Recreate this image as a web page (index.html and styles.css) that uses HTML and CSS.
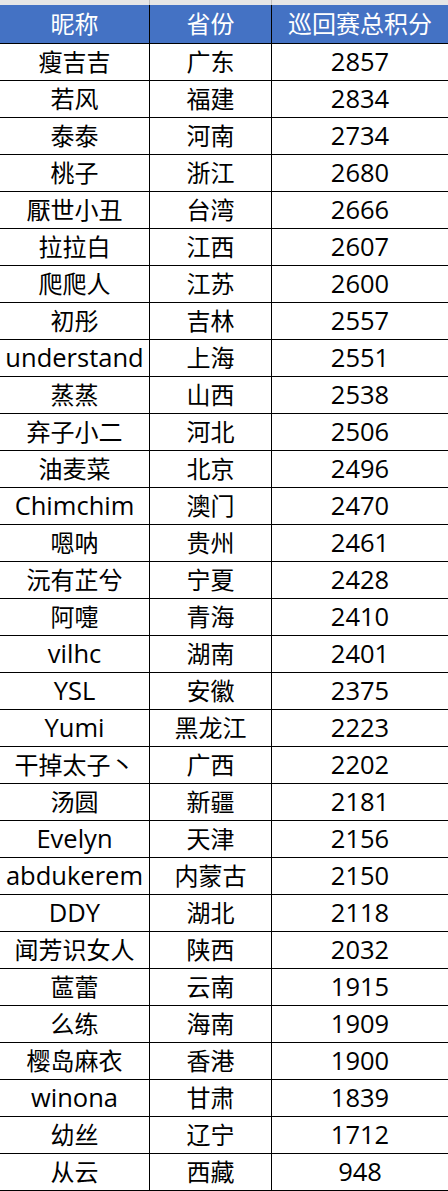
FILE: index.html
```html
<!DOCTYPE html>
<html lang="zh">
<head>
<meta charset="utf-8">
<link rel="stylesheet" href="styles.css">
</head>
<body>
<div class="sheet">
  <div class="strip"><span></span><span></span></div>
  <div class="row head"><div>昵称</div><div>省份</div><div>巡回赛总积分</div></div>
  <div class="row"><div>瘦吉吉</div><div>广东</div><div class="en">2857</div></div>
  <div class="row"><div>若风</div><div>福建</div><div class="en">2834</div></div>
  <div class="row"><div>泰泰</div><div>河南</div><div class="en">2734</div></div>
  <div class="row"><div>桃子</div><div>浙江</div><div class="en">2680</div></div>
  <div class="row"><div>厭世小丑</div><div>台湾</div><div class="en">2666</div></div>
  <div class="row"><div>拉拉白</div><div>江西</div><div class="en">2607</div></div>
  <div class="row"><div>爬爬人</div><div>江苏</div><div class="en">2600</div></div>
  <div class="row"><div>初彤</div><div>吉林</div><div class="en">2557</div></div>
  <div class="row"><div class="en">understand</div><div>上海</div><div class="en">2551</div></div>
  <div class="row"><div>蒸蒸</div><div>山西</div><div class="en">2538</div></div>
  <div class="row"><div>弃子小二</div><div>河北</div><div class="en">2506</div></div>
  <div class="row"><div>油麦菜</div><div>北京</div><div class="en">2496</div></div>
  <div class="row"><div class="en">Chimchim</div><div>澳门</div><div class="en">2470</div></div>
  <div class="row"><div>嗯呐</div><div>贵州</div><div class="en">2461</div></div>
  <div class="row"><div>沅有芷兮</div><div>宁夏</div><div class="en">2428</div></div>
  <div class="row"><div>阿嚏</div><div>青海</div><div class="en">2410</div></div>
  <div class="row"><div class="en">vilhc</div><div>湖南</div><div class="en">2401</div></div>
  <div class="row"><div class="en">YSL</div><div>安徽</div><div class="en">2375</div></div>
  <div class="row"><div class="en">Yumi</div><div>黑龙江</div><div class="en">2223</div></div>
  <div class="row"><div>干掉太子丶</div><div>广西</div><div class="en">2202</div></div>
  <div class="row"><div>汤圆</div><div>新疆</div><div class="en">2181</div></div>
  <div class="row"><div class="en">Evelyn</div><div>天津</div><div class="en">2156</div></div>
  <div class="row"><div class="en">abdukerem</div><div>内蒙古</div><div class="en">2150</div></div>
  <div class="row"><div class="en">DDY</div><div>湖北</div><div class="en">2118</div></div>
  <div class="row"><div>闻芳识女人</div><div>陕西</div><div class="en">2032</div></div>
  <div class="row"><div>蓲蕾</div><div>云南</div><div class="en">1915</div></div>
  <div class="row"><div>么练</div><div>海南</div><div class="en">1909</div></div>
  <div class="row"><div>樱岛麻衣</div><div>香港</div><div class="en">1900</div></div>
  <div class="row"><div class="en">winona</div><div>甘肃</div><div class="en">1839</div></div>
  <div class="row"><div>幼丝</div><div>辽宁</div><div class="en">1712</div></div>
  <div class="row"><div>从云</div><div>西藏</div><div class="en">948</div></div>
</div>
</body>
</html>
```
FILE: styles.css
```css
html, body {
  margin: 0;
  padding: 0;
  background: #ffffff;
}
.sheet {
  width: 448px;
  font-family: "Open Sans", "Noto Sans CJK SC", sans-serif;
  font-size: 24px;
  color: #000000;
}
.strip {
  height: 5px;
  background: #e6e6e6;
  display: grid;
  grid-template-columns: 149px 1px 121px 1px 176px;
}
.strip span:nth-child(1) { grid-column: 2; background: #bdbdbd; }
.strip span:nth-child(2) { grid-column: 4; background: #bdbdbd; }
.row {
  display: grid;
  grid-template-columns: 150px 122px 176px;
  height: 36px;
  border-bottom: 1px solid #000000;
}
.row > div {
  display: flex;
  align-items: center;
  justify-content: center;
  line-height: 1;
  white-space: nowrap;
  overflow: hidden;
}
.row > div.en {
  font-size: 25.5px;
}
.row > div:nth-child(1),
.row > div:nth-child(2) {
  border-right: 1px solid #000000;
}
.head {
  height: 38px;
  background: #4472c4;
  color: #ffffff;
}
```
